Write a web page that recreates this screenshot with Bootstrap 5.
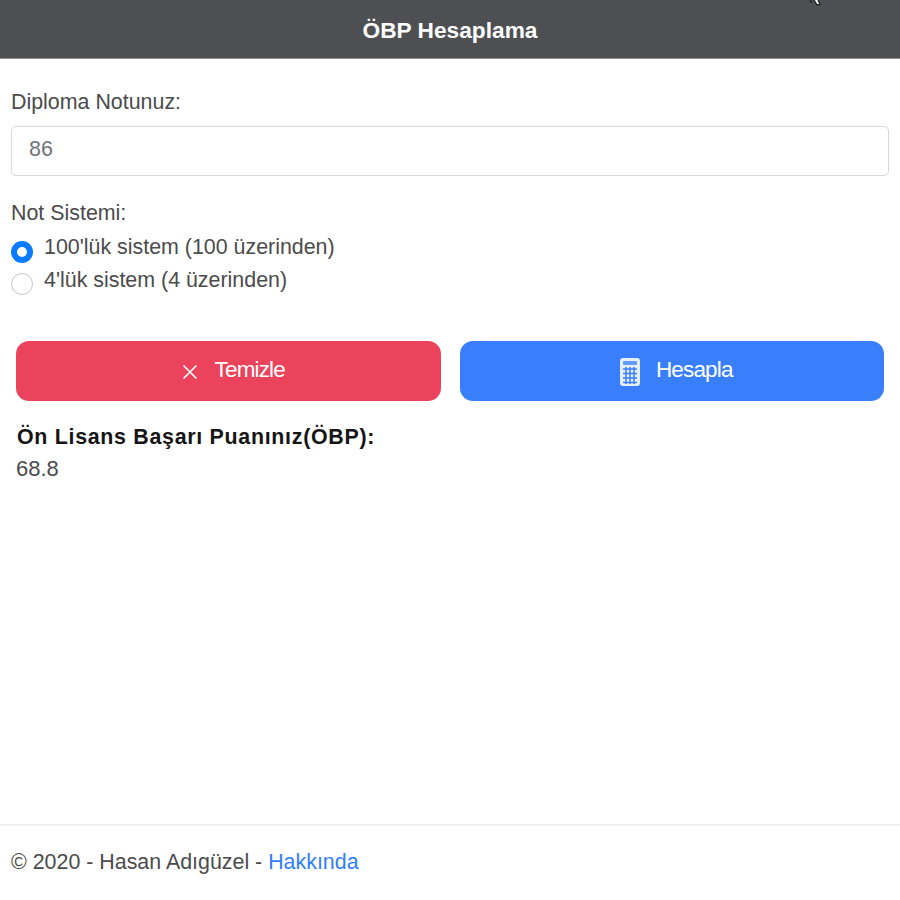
<!DOCTYPE html>
<html lang="tr">
<head>
<meta charset="utf-8">
<title>ÖBP Hesaplama</title>
<link rel="stylesheet" href="https://cdn.jsdelivr.net/npm/bootstrap@5.3.0/dist/css/bootstrap.min.css">
<style>
html,body{height:900px;overflow:hidden}
body{font-family:"Liberation Sans",Arial,sans-serif;font-size:21.4px;line-height:32px;color:#4b4b4b;background:#fff}
.top-bar{height:59px;background:#4e4f52;border-bottom:1px solid #8f9092;color:#fff;font-weight:700;font-size:22.7px;padding-top:2px;position:relative}
.cursor-mark{position:absolute;left:808px;top:0}
.page-main{padding:27px 11px 0}
.field-label{margin:0 0 8px;line-height:32px}
.note-input{height:50px;font-size:21.5px;color:#6f7479;padding:0 17px 3px;border-color:#d6d8da;border-radius:5px}
.note-input:focus{color:#6f7479;border-color:#d6d8da;box-shadow:none}
.system-label{margin:21px 0 3px;line-height:32px}
.radio-row{height:32px;gap:11px}
.radio-row input{appearance:none;width:22px;height:22px;margin:9px 0 0;border:1px solid #c4c6c8;border-radius:50%;background:#fff;flex:none}
.radio-row input:checked{border:6px solid #0a7bff}
.radio-row label{margin-top:-1px;line-height:32px}
.radio-row.radio-low label{margin-top:0}
.btn-line{padding:0 5px;margin-top:45px;gap:19px}
.act-btn{height:60px;border:0;border-radius:13px;color:#fff;font-size:22.5px;letter-spacing:-.85px;gap:16px;padding:2px 0 0 9px}
.act-btn span{margin-bottom:5px}
.act-red,.act-red:hover{background:#ec435c;color:#fff}
.act-blue,.act-blue:hover{background:#397ffb;color:#fff}
.result-box{padding:0 6px;margin-top:20px}
.result-title{color:#151515;font-weight:700;letter-spacing:.7px;line-height:32px}
.result-value{line-height:32px;font-size:22px;margin-left:-1px}
.foot-bar{position:relative;margin-top:auto;height:76px;border-top:2px solid #efefef;padding:20px 11px 0;line-height:32px}
.foot-bar a{color:#2f80f5;text-decoration:none}
</style>
</head>
<body class="d-flex flex-column">
<header class="top-bar d-flex align-items-center justify-content-center">
  <span>ÖBP Hesaplama</span>
  <svg class="cursor-mark" width="16" height="8" viewBox="0 0 16 8" aria-hidden="true"><path d="M2 0l2 3M6 0l3 5 3-1-2-4" fill="#fff" stroke="#222" stroke-width="1.4"/></svg>
</header>
<main class="page-main">
  <label class="field-label d-block" for="nota">Diploma Notunuz:</label>
  <input id="nota" class="form-control note-input" type="text" value="86">
  <p class="system-label">Not Sistemi:</p>
  <div class="radio-row d-flex align-items-start">
    <input type="radio" name="sys" id="s100" checked>
    <label for="s100">100'lük sistem (100 üzerinden)</label>
  </div>
  <div class="radio-row radio-low d-flex align-items-start">
    <input type="radio" name="sys" id="s4">
    <label for="s4">4'lük sistem (4 üzerinden)</label>
  </div>
  <div class="btn-line d-flex">
    <button type="button" class="btn act-btn act-red flex-fill w-50 d-flex align-items-center justify-content-center">
      <svg width="18" height="18" viewBox="0 0 18 18" aria-hidden="true"><path d="M2.5 2.5l13 13M15.500 2.500l-13 13" stroke="#fff" stroke-width="1.600" fill="none"/></svg>
      <span>Temizle</span>
    </button>
    <button type="button" class="btn act-btn act-blue flex-fill w-50 d-flex align-items-center justify-content-center">
      <svg width="20" height="28" viewBox="0 0 20 28" aria-hidden="true"><rect x="0" y="0" width="20" height="28" rx="3" fill="#e4eeff"/><rect x="3" y="3" width="14" height="4" rx="1" fill="#397ffb" fill-opacity=".75"/><path d="M3 11h14M3 15.500h14M3 20h14M3 24.500h14M6 9v17M10 9v17M14 9v17" stroke="#397ffb" stroke-width="1.500"/></svg>
      <span>Hesapla</span>
    </button>
  </div>
  <div class="result-box">
    <div class="result-title">Ön Lisans Başarı Puanınız(ÖBP):</div>
    <div class="result-value">68.8</div>
  </div>
</main>
<footer class="foot-bar">© 2020 - Hasan Adıgüzel - <a href="#">Hakkında</a></footer>
<script src="https://cdn.jsdelivr.net/npm/bootstrap@5.3.0/dist/js/bootstrap.bundle.min.js"></script>
</body>
</html>
